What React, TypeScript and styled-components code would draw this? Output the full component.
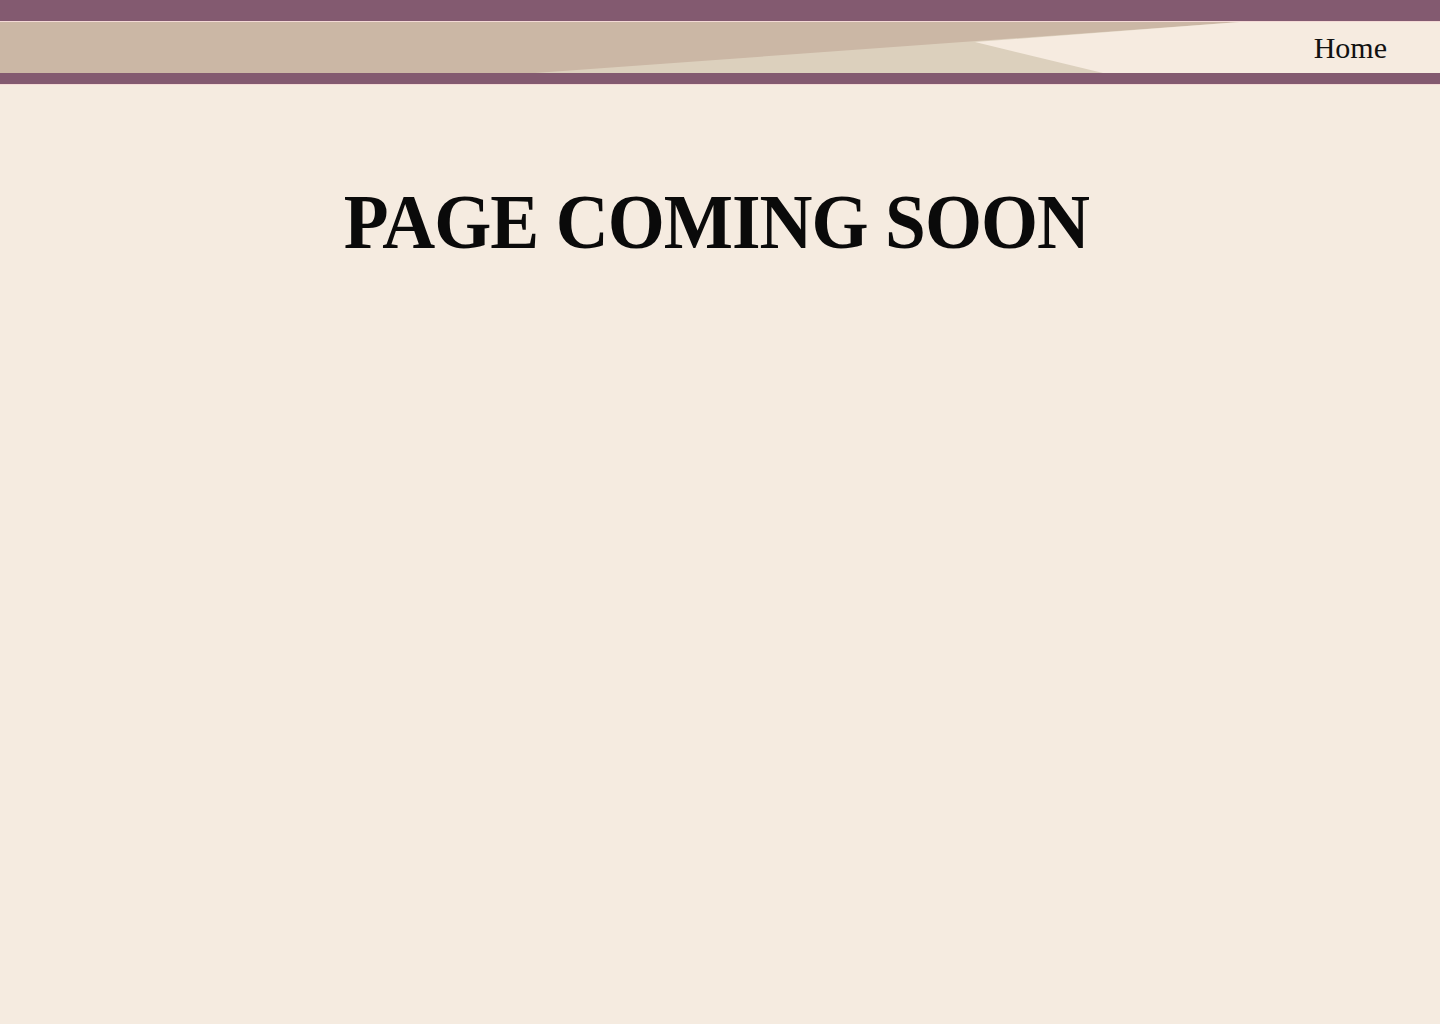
import React from "react";
import styled, { createGlobalStyle } from "styled-components";

const Global = createGlobalStyle`
  html, body {
    margin: 0;
    padding: 0;
    background: #f5ebe0;
    min-height: 100%;
  }
  body {
    font-family: "Liberation Serif", "DejaVu Serif", serif;
    color: #0b0b0b;
  }
`;

const Page = styled.div`
  min-height: 1024px;
  background: #f5ebe0;
  display: flex;
  flex-direction: column;
`;

const Header = styled.header`
  display: flex;
  flex-direction: column;
`;

const Band = styled.div<{ $h: number }>`
  height: ${(p) => p.$h}px;
  background: #835a70;
`;

const Rule = styled.div`
  height: 1px;
  background: #f4d9d6;
`;

const Banner = styled.nav`
  position: relative;
  height: 51px;
  background: #cbb7a5;
  display: flex;
  align-items: center;
  justify-content: flex-end;
  padding-right: 53px;
  overflow: hidden;
`;

const BannerArt = styled.svg`
  position: absolute;
  inset: 0;
  width: 100%;
  height: 100%;
`;

const NavLink = styled.a`
  position: relative;
  font-family: "Liberation Serif", serif;
  font-size: 30px;
  color: #111;
  text-decoration: none;
  line-height: 1;
`;

const Main = styled.main`
  display: flex;
  justify-content: center;
  padding-top: 90px;
`;

const Title = styled.h1`
  margin: 0;
  font-family: "Liberation Serif", serif;
  font-weight: 700;
  font-size: 78px;
  letter-spacing: -1px;
  line-height: 1.2;
  color: #0a0a0a;
  transform: translateX(-4px) scaleX(0.94);
`;

export default function App() {
  return (
    <>
      <Global />
      <Page>
        <Header>
          <Band $h={21} />
          <Rule />
          <Banner>
            <BannerArt viewBox="0 0 1440 51" preserveAspectRatio="none">
              <polygon points="535,51 1240,0 1440,0 1440,51" fill="#dcd0bd" />
              <polygon points="975,20 1240,0 1440,0 1440,51 1103,51" fill="#f6ebe0" />
            </BannerArt>
            <NavLink href="#">Home</NavLink>
          </Banner>
          <Band $h={11} />
          <Rule />
        </Header>
        <Main>
          <Title>PAGE COMING SOON</Title>
        </Main>
      </Page>
    </>
  );
}
